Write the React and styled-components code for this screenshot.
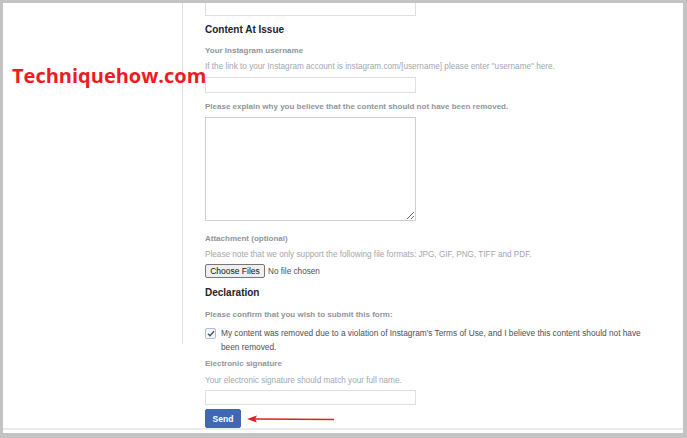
import React from 'react';
import styled, { createGlobalStyle } from 'styled-components';

const Global = createGlobalStyle`
  html, body {
    margin: 0;
    padding: 0;
    background: #c3c3c3;
    height: 438px;
    overflow: hidden;
  }
  * { box-sizing: border-box; }
`;

const Panel = styled.div`
  position: relative;
  margin: 3px 4px 0 3px;
  height: 430px;
  background: #ffffff;
  display: flex;
  flex-direction: column;
  font-family: 'Liberation Sans', Arial, sans-serif;
`;

const Body = styled.div`
  flex: 1;
  display: flex;
  align-items: flex-start;
`;

const Sidebar = styled.div`
  width: 180px;
  height: 341px;
  border-right: 1px solid #dddfe2;
  flex-shrink: 0;
`;

const Main = styled.div`
  padding-left: 22px;
  display: flex;
  flex-direction: column;
  align-items: flex-start;
`;

const Footer = styled.div`
  height: 3px;
  margin-bottom: 3px;
  background: #ebebeb;
`;

const Watermark = styled.div`
  position: absolute;
  left: 9px;
  top: 59px;
  font-family: 'Open Sans', 'Liberation Sans', sans-serif;
  font-weight: 700;
  font-size: 20px;
  color: #ec1b24;
  white-space: nowrap;
`;

const CutInput = styled.div`
  width: 211px;
  height: 13px;
  border: 1px solid #dddfe2;
  border-top: none;
`;

const Heading = styled.h2`
  margin: ${p => p.$mt}px 0 0;
  font-size: 10px;
  line-height: 14px;
  font-weight: 700;
  color: #1d2129;
`;

const Label = styled.div`
  margin-top: ${p => p.$mt}px;
  font-size: 8px;
  line-height: 12px;
  font-weight: 700;
  color: #90949c;
`;

const Help = styled.div`
  margin-top: ${p => p.$mt}px;
  font-size: 8.2px;
  line-height: 12px;
  color: #a3a7ad;
`;

const Input = styled.input`
  margin-top: ${p => p.$mt}px;
  width: 211px;
  height: ${p => p.$h}px;
  border: 1px solid #dddfe2;
  padding: 0 4px;
  outline: none;
  font-size: 8px;
`;

const Area = styled.textarea`
  margin-top: 4px;
  width: 211px;
  height: 104px;
  border: 1px solid #ccd0d5;
  outline: none;
  resize: both;
  display: block;
`;

const FileRow = styled.div`
  margin-top: 3px;
  display: flex;
  align-items: center;
  gap: 3px;
  font-size: 8.2px;
  color: #4b4f56;
`;

const FileButton = styled.button`
  width: 60px;
  height: 14px;
  padding: 0;
  border: 1px solid #767676;
  border-radius: 2px;
  background: #efefef;
  font-family: 'Liberation Sans', Arial, sans-serif;
  font-size: 8.5px;
  color: #111;
  line-height: 12px;
`;

const CheckRow = styled.label`
  margin-top: 5px;
  display: flex;
  align-items: flex-start;
  gap: 5px;
  width: 442px;
`;

const Box = styled.span`
  flex-shrink: 0;
  margin-top: 2px;
  width: 11px;
  height: 11px;
  border: 1px solid #a9bde0;
  border-radius: 2px;
  background: #f5f7fb;
  display: flex;
  align-items: center;
  justify-content: center;
`;

const CheckText = styled.span`
  font-size: 8.3px;
  line-height: 14px;
  color: #4b4f56;
`;

const SendRow = styled.div`
  margin-top: 4px;
  display: flex;
  align-items: center;
  gap: 6px;
`;

const SendButton = styled.button`
  width: 36px;
  height: 19px;
  padding: 0;
  border: 1px solid #4267b2;
  border-radius: 2px;
  background: #4267b2;
  color: #fff;
  font-family: 'Liberation Sans', Arial, sans-serif;
  font-weight: 700;
  font-size: 8.5px;
`;

const Arrow = () => (
  <svg width="88" height="8" viewBox="0 0 88 8">
    <line x1="8" y1="4" x2="87" y2="4.5" stroke="#e31e24" strokeWidth="1.6" />
    <path d="M0 4 L10 0.5 L8 4 L10 7.5 Z" fill="#e31e24" />
  </svg>
);

const Tick = () => (
  <svg width="8" height="7" viewBox="0 0 8 7">
    <path d="M1 3.8 L3 5.8 L7 1.2" fill="none" stroke="#4b4f56" strokeWidth="1.3" />
  </svg>
);

export default function App() {
  return (
    <>
      <Global />
      <Panel>
        <Body>
          <Sidebar />
          <Main>
            <CutInput />
            <Heading $mt={7}>Content At Issue</Heading>
            <Label $mt={8}>Your Instagram username</Label>
            <Help $mt={4}>
              If the link to your Instagram account is instagram.com/[username] please enter "username" here.
            </Help>
            <Input $mt={4} $h={16} />
            <Label $mt={8}>Please explain why you believe that the content should not have been removed.</Label>
            <Area />
            <Label $mt={12}>Attachment (optional)</Label>
            <Help $mt={4}>
              Please note that we only support the following file formats: JPG, GIF, PNG, TIFF and PDF.
            </Help>
            <FileRow>
              <FileButton>Choose Files</FileButton>
              <span>No file chosen</span>
            </FileRow>
            <Heading $mt={8}>Declaration</Heading>
            <Label $mt={9}>Please confirm that you wish to submit this form:</Label>
            <CheckRow>
              <Box><Tick /></Box>
              <CheckText>
                My content was removed due to a violation of Instagram's Terms of Use, and I believe this content should not have been removed.
              </CheckText>
            </CheckRow>
            <Label $mt={4}>Electronic signature</Label>
            <Help $mt={5}>Your electronic signature should match your full name.</Help>
            <Input $mt={3} $h={15} />
            <SendRow>
              <SendButton>Send</SendButton>
              <Arrow />
            </SendRow>
          </Main>
        </Body>
        <Footer />
        <Watermark>Techniquehow.com</Watermark>
      </Panel>
    </>
  );
}
